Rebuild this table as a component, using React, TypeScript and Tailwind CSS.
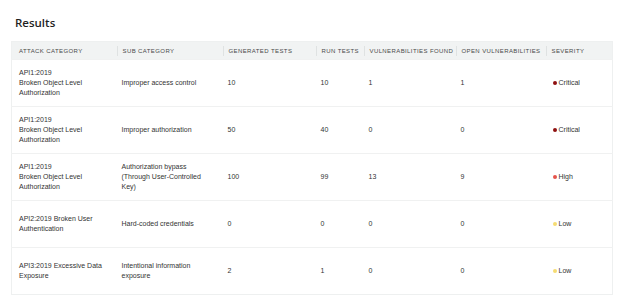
const rows = [
  { cat: ["API1:2019", "Broken Object Level", "Authorization"], sub: ["Improper access control"], gen: "10", run: "10", found: "1", open: "1", sev: "Critical" },
  { cat: ["API1:2019", "Broken Object Level", "Authorization"], sub: ["Improper authorization"], gen: "50", run: "40", found: "0", open: "0", sev: "Critical" },
  { cat: ["API1:2019", "Broken Object Level", "Authorization"], sub: ["Authorization bypass", "(Through User-Controlled", "Key)"], gen: "100", run: "99", found: "13", open: "9", sev: "High" },
  { cat: ["API2:2019 Broken User", "Authentication"], sub: ["Hard-coded credentials"], gen: "0", run: "0", found: "0", open: "0", sev: "Low" },
  { cat: ["API3:2019 Excessive Data", "Exposure"], sub: ["Intentional information", "exposure"], gen: "2", run: "1", found: "0", open: "0", sev: "Low" },
]

const dot: Record<string, string> = {
  Critical: "bg-[#8e1010]",
  High: "bg-[#e5534b]",
  Low: "bg-[#f6dc72]",
}

const heads = ["Attack Category", "Sub Category", "Generated Tests", "Run Tests", "Vulnerabilities Found", "Open Vulnerabilities", "Severity"]

export default function App() {
  return (
    <div className="w-[622px] h-[306px] bg-white px-[11px] pt-[16px] font-['Liberation_Sans',sans-serif] text-[#2b2b2b]">
      <h1 className="text-[11.5px] font-semibold pl-[4px] leading-[14px] text-[#1f1f1f] font-['Open_Sans',sans-serif]">Results</h1>
      <table className="mt-[11px] w-[601px] table-fixed border-collapse border border-[#eef0f0]">
        <colgroup>
          <col className="w-[105px]" />
          <col className="w-[106px]" />
          <col className="w-[93px]" />
          <col className="w-[48px]" />
          <col className="w-[92px]" />
          <col className="w-[90px]" />
          <col className="w-[67px]" />
        </colgroup>
        <thead>
          <tr className="bg-[#f1f3f3] h-[18px]">
            {heads.map((h, i) => (
              <th key={h} className="p-0 text-left font-normal">
                <div className={`uppercase text-[6px] tracking-[0.4px] text-[#4a4a4a] leading-[10px] whitespace-nowrap ${i === 0 ? "pl-[7px]" : "pl-[5px] border-l border-[#dfe2e2]"}`}>
                  {h}
                </div>
              </th>
            ))}
          </tr>
        </thead>
        <tbody>
          {rows.map((r, i) => (
            <tr key={i} className="h-[47px] border-t border-[#f0f1f1] text-[7px] leading-[10px] text-[#333]">
              <td className="pl-[7px] align-middle">{r.cat.map((l) => <div key={l}>{l}</div>)}</td>
              <td className="pl-[5px] align-middle">{r.sub.map((l) => <div key={l}>{l}</div>)}</td>
              <td className="pl-[5px] align-middle">{r.gen}</td>
              <td className="pl-[5px] align-middle">{r.run}</td>
              <td className="pl-[5px] align-middle">{r.found}</td>
              <td className="pl-[5px] align-middle">{r.open}</td>
              <td className="pl-[7px] align-middle">
                <div className="flex items-center gap-[2px]">
                  <span className={`w-[4px] h-[4px] rounded-full ${dot[r.sev]}`} />
                  <span>{r.sev}</span>
                </div>
              </td>
            </tr>
          ))}
        </tbody>
      </table>
    </div>
  )
}
